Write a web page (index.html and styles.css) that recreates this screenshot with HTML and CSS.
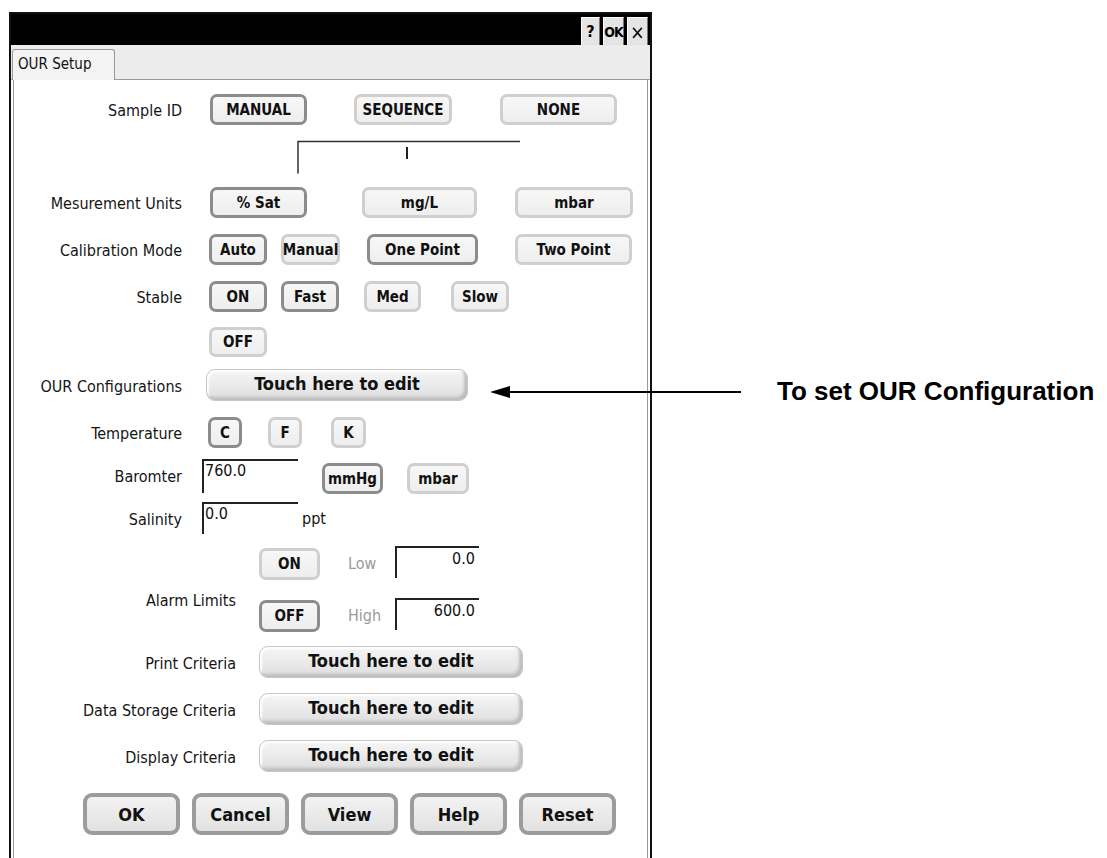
FILE: index.html
```html
<!DOCTYPE html>
<html>
<head>
<meta charset="utf-8">
<link rel="stylesheet" href="styles.css">
</head>
<body>
<div class="frame">
  <div class="titlebar">
    <span class="tb-btn">?</span>
    <span class="tb-btn tb-ok">OK</span>
    <span class="tb-btn tb-x">×</span>
  </div>
  <div class="tabstrip">
    <div class="tab">OUR Setup</div>
  </div>
  <div class="panel">
    <div class="row r-sample">
      <div class="lbl">Sample ID</div>
      <div class="ctrls c1">
        <div class="btn sel w97">MANUAL</div>
        <div class="btn w98 ml47">SEQUENCE</div>
        <div class="btn w117 ml48">NONE</div>
      </div>
    </div>
    <svg class="connector" width="640" height="62" viewBox="0 0 640 62">
      <path d="M284 48.5V16.5H506" fill="none" stroke="#333" stroke-width="1.5"/>
      <path d="M393 22V34" fill="none" stroke="#222" stroke-width="2"/>
    </svg>
    <div class="row r-units">
      <div class="lbl">Mesurement Units</div>
      <div class="ctrls c1">
        <div class="btn sel w97">% Sat</div>
        <div class="btn w115 ml55">mg/L</div>
        <div class="btn w118 ml38">mbar</div>
      </div>
    </div>
    <div class="row r-calib">
      <div class="lbl">Calibration Mode</div>
      <div class="ctrls c0">
        <div class="btn sel w58">Auto</div>
        <div class="btn w59 ml14">Manual</div>
        <div class="btn sel w111 ml27">One Point</div>
        <div class="btn w117 ml37">Two Point</div>
      </div>
    </div>
    <div class="row r-stable">
      <div class="lbl">Stable</div>
      <div class="ctrls c0">
        <div class="btn sel w58">ON</div>
        <div class="btn sel w58 ml14">Fast</div>
        <div class="btn w57 ml25">Med</div>
        <div class="btn w58 ml30">Slow</div>
      </div>
    </div>
    <div class="row r-off">
      <div class="lbl"></div>
      <div class="ctrls c0">
        <div class="btn w58 h30">OFF</div>
      </div>
    </div>
    <div class="row r-our">
      <div class="lbl">OUR Configurations</div>
      <div class="ctrls cm3">
        <div class="edit w262">Touch here to edit</div>
      </div>
    </div>
    <div class="row r-temp">
      <div class="lbl">Temperature</div>
      <div class="ctrls cm1">
        <div class="btn sel w34">C</div>
        <div class="btn w34 ml26">F</div>
        <div class="btn w35 ml29">K</div>
      </div>
    </div>
    <div class="row r-baro">
      <div class="lbl lbl-top">Baromter</div>
      <div class="ctrls cm7 top">
        <div class="inp">760.0</div>
        <div class="btn sel w61 ml24 mt4">mmHg</div>
        <div class="btn w62 ml24 mt4">mbar</div>
      </div>
    </div>
    <div class="row r-sal">
      <div class="lbl lbl-top">Salinity</div>
      <div class="ctrls cm7 top">
        <div class="inp">0.0</div>
        <div class="unit">ppt</div>
      </div>
    </div>
    <div class="alarm">
      <div class="lbl lbl2 alarm-lbl">Alarm Limits</div>
      <div class="alarm-rows">
        <div class="arow">
          <div class="btn w61 h32 mt2">ON</div>
          <div class="lim">Low</div>
          <div class="inp inp-r">0.0</div>
        </div>
        <div class="arow arow2">
          <div class="btn sel w61 h32 mt2">OFF</div>
          <div class="lim">High</div>
          <div class="inp inp-r">600.0</div>
        </div>
      </div>
    </div>
    <div class="row r-print">
      <div class="lbl lbl2">Print Criteria</div>
      <div class="ctrls c2">
        <div class="edit w264">Touch here to edit</div>
      </div>
    </div>
    <div class="row r-data">
      <div class="lbl lbl2">Data Storage Criteria</div>
      <div class="ctrls c2">
        <div class="edit w264">Touch here to edit</div>
      </div>
    </div>
    <div class="row r-disp">
      <div class="lbl lbl2">Display Criteria</div>
      <div class="ctrls c2">
        <div class="edit w264">Touch here to edit</div>
      </div>
    </div>
    <div class="bottom">
      <div class="bbtn">OK</div>
      <div class="bbtn">Cancel</div>
      <div class="bbtn">View</div>
      <div class="bbtn">Help</div>
      <div class="bbtn">Reset</div>
    </div>
  </div>
</div>
<div class="callout">
  <svg class="arrow" width="252" height="16" viewBox="0 0 252 16">
    <path d="M0 8L20 2V14Z" fill="#000"/>
    <path d="M18 8H251" stroke="#000" stroke-width="2"/>
  </svg>
  <span class="callout-text">To set OUR Configuration</span>
</div>
</body>
</html>
```

FILE: styles.css
```css
html, body {
  margin: 0;
  padding: 0;
  background: #fff;
  overflow: hidden;
}
body {
  position: relative;
  height: 858px;
  font-family: "DejaVu Sans Condensed", "DejaVu Sans", sans-serif;
  color: #000;
}
.frame {
  margin: 12px 0 0 9px;
  width: 643px;
  height: 900px;
  box-sizing: border-box;
  border: 2px solid #111;
  border-bottom: none;
  display: flex;
  flex-direction: column;
}
.titlebar {
  height: 31px;
  flex: none;
  background: #000;
  display: flex;
  justify-content: flex-end;
  align-items: flex-end;
  gap: 3px;
  padding-right: 2px;
}
.tb-btn {
  width: 19px;
  height: 28px;
  box-sizing: border-box;
  background: #e4e4e4;
  border: 1px solid #fff;
  border-right-color: #777;
  border-bottom: none;
  display: flex;
  align-items: center;
  justify-content: center;
  font: bold 16px "DejaVu Sans Condensed", sans-serif;
}
.tb-ok { width: 21px; font-size: 14px; letter-spacing: -1px; }
.tb-x { width: 21px; font-weight: normal; font-size: 19px; }
.tabstrip {
  height: 35px;
  flex: none;
  background: #ececec;
  border-bottom: 1px solid #9a9a9a;
  box-sizing: border-box;
  display: flex;
  align-items: flex-end;
  padding-left: 1px;
}
.tab {
  width: 103px;
  height: 31px;
  box-sizing: border-box;
  margin-bottom: -1px;
  background: #f3f3f3;
  border: 1px solid #9a9a9a;
  border-bottom: none;
  border-radius: 3px 3px 0 0;
  font-size: 15px;
  padding: 5px 0 0 5px;
  color: #111;
}
.panel {
  flex: 1;
  background: #fff;
  border-left: 1px solid #9a9a9a;
  border-right: 1px solid #9a9a9a;
  margin: 0 2px;
  padding-top: 14px;
}
.row {
  display: flex;
  align-items: center;
}
.lbl {
  width: 168px;
  flex: none;
  text-align: right;
  font-size: 16px;
  color: #151515;
  white-space: nowrap;
  padding-top: 2px;
}
.lbl2 { width: 222px; }
.ctrls {
  display: flex;
  align-items: center;
}
.ctrls.top { align-items: flex-start; }
.c1 { margin-left: 28px; }
.c0 { margin-left: 27px; }
.cm3 { margin-left: 24px; }
.cm1 { margin-left: 26px; }
.cm7 { margin-left: 20px; }
.c2 { margin-left: 23px; }

.btn {
  height: 31px;
  box-sizing: border-box;
  border: 3px solid #cfcfcf;
  border-radius: 7px;
  background: linear-gradient(#f7f7f7, #eeeeee);
  display: flex;
  align-items: center;
  justify-content: center;
  font-weight: bold;
  font-size: 15px;
  color: #111;
  flex: none;
  white-space: nowrap;
}
.btn.sel { border-color: #8c8c8c; }
.h30 { height: 30px; }
.h32 { height: 32px; }
.w34 { width: 34px; }
.w35 { width: 35px; }
.w57 { width: 57px; }
.w58 { width: 58px; }
.w59 { width: 59px; }
.w61 { width: 61px; }
.w62 { width: 62px; }
.w97 { width: 97px; }
.w98 { width: 98px; }
.w111 { width: 111px; }
.w115 { width: 115px; }
.w117 { width: 117px; }
.w118 { width: 118px; }
.ml14 { margin-left: 14px; }
.ml15 { margin-left: 15px; }
.ml24 { margin-left: 24px; }
.ml25 { margin-left: 25px; }
.ml26 { margin-left: 26px; }
.ml27 { margin-left: 27px; }
.ml28 { margin-left: 28px; }
.ml29 { margin-left: 29px; }
.ml30 { margin-left: 30px; }
.ml37 { margin-left: 37px; }
.ml38 { margin-left: 38px; }
.ml47 { margin-left: 47px; }
.ml48 { margin-left: 48px; }
.ml55 { margin-left: 55px; }
.mt2 { margin-top: 2px; }
.mt4 { margin-top: 4px; }

.connector { display: block; }

.r-calib { margin-top: 16px; }
.r-stable { margin-top: 16px; }
.r-off { margin-top: 15px; }
.r-our { margin-top: 12px; }
.r-temp { margin-top: 16px; }
.r-baro { margin-top: 11px; align-items: flex-start; }
.r-sal { margin-top: 8px; align-items: flex-start; }
.lbl-top { padding-top: 8px; }

.edit {
  height: 32px;
  box-sizing: border-box;
  border-radius: 9px;
  background: linear-gradient(#f5f5f5 0%, #ececec 45%, #dcdcdc 100%);
  border: 1px solid #c6c6c6;
  box-shadow: inset -3px -3px 3px #bdbdbd, inset 2px 2px 2px #fff;
  display: flex;
  align-items: center;
  justify-content: center;
  font-weight: bold;
  font-size: 18px;
  color: #111;
  padding-bottom: 3px;
}
.w262 { width: 262px; }
.w264 { width: 264px; }

.inp {
  width: 96px;
  height: 34px;
  box-sizing: border-box;
  border-top: 2px solid #222;
  border-left: 2px solid #222;
  background: #fff;
  font-size: 16px;
  padding: 0 0 0 1px;
  color: #111;
}
.r-sal .inp { height: 32px; }
.unit {
  font-size: 16px;
  margin: 7px 0 0 4px;
  color: #111;
}

.alarm {
  margin-top: 12px;
  display: flex;
}
.alarm-lbl { padding-top: 45px; }
.alarm-rows {
  margin-left: 23px;
  display: flex;
  flex-direction: column;
}
.arow {
  display: flex;
  align-items: flex-start;
}
.arow2 { margin-top: 18px; }
.lim {
  width: 47px;
  box-sizing: border-box;
  padding: 8px 0 0 28px;
  font-size: 16px;
  color: #9a9a9a;
}
.inp-r {
  width: 84px;
  height: 32px;
  text-align: right;
  padding: 1px 4px 0 0;
  margin-left: 28px;
}

.r-print { margin-top: 14px; }
.r-data { margin-top: 15px; }
.r-disp { margin-top: 15px; }

.bottom {
  display: flex;
  gap: 12px;
  margin: 21px 0 0 69px;
}
.bbtn {
  width: 97px;
  height: 42px;
  box-sizing: border-box;
  border: 4px solid #9c9c9c;
  border-radius: 9px;
  background: linear-gradient(#f2f2f2, #e2e2e2);
  display: flex;
  align-items: center;
  justify-content: center;
  font-weight: bold;
  font-size: 18px;
  color: #111;
}

.callout {
  position: absolute;
  left: 490px;
  top: 376px;
  display: flex;
  align-items: center;
}
.arrow { display: block; }
.callout-text {
  margin-left: 35px;
  font: bold 26px "Liberation Sans", Arial, sans-serif;
  color: #000;
  white-space: nowrap;
}
```
